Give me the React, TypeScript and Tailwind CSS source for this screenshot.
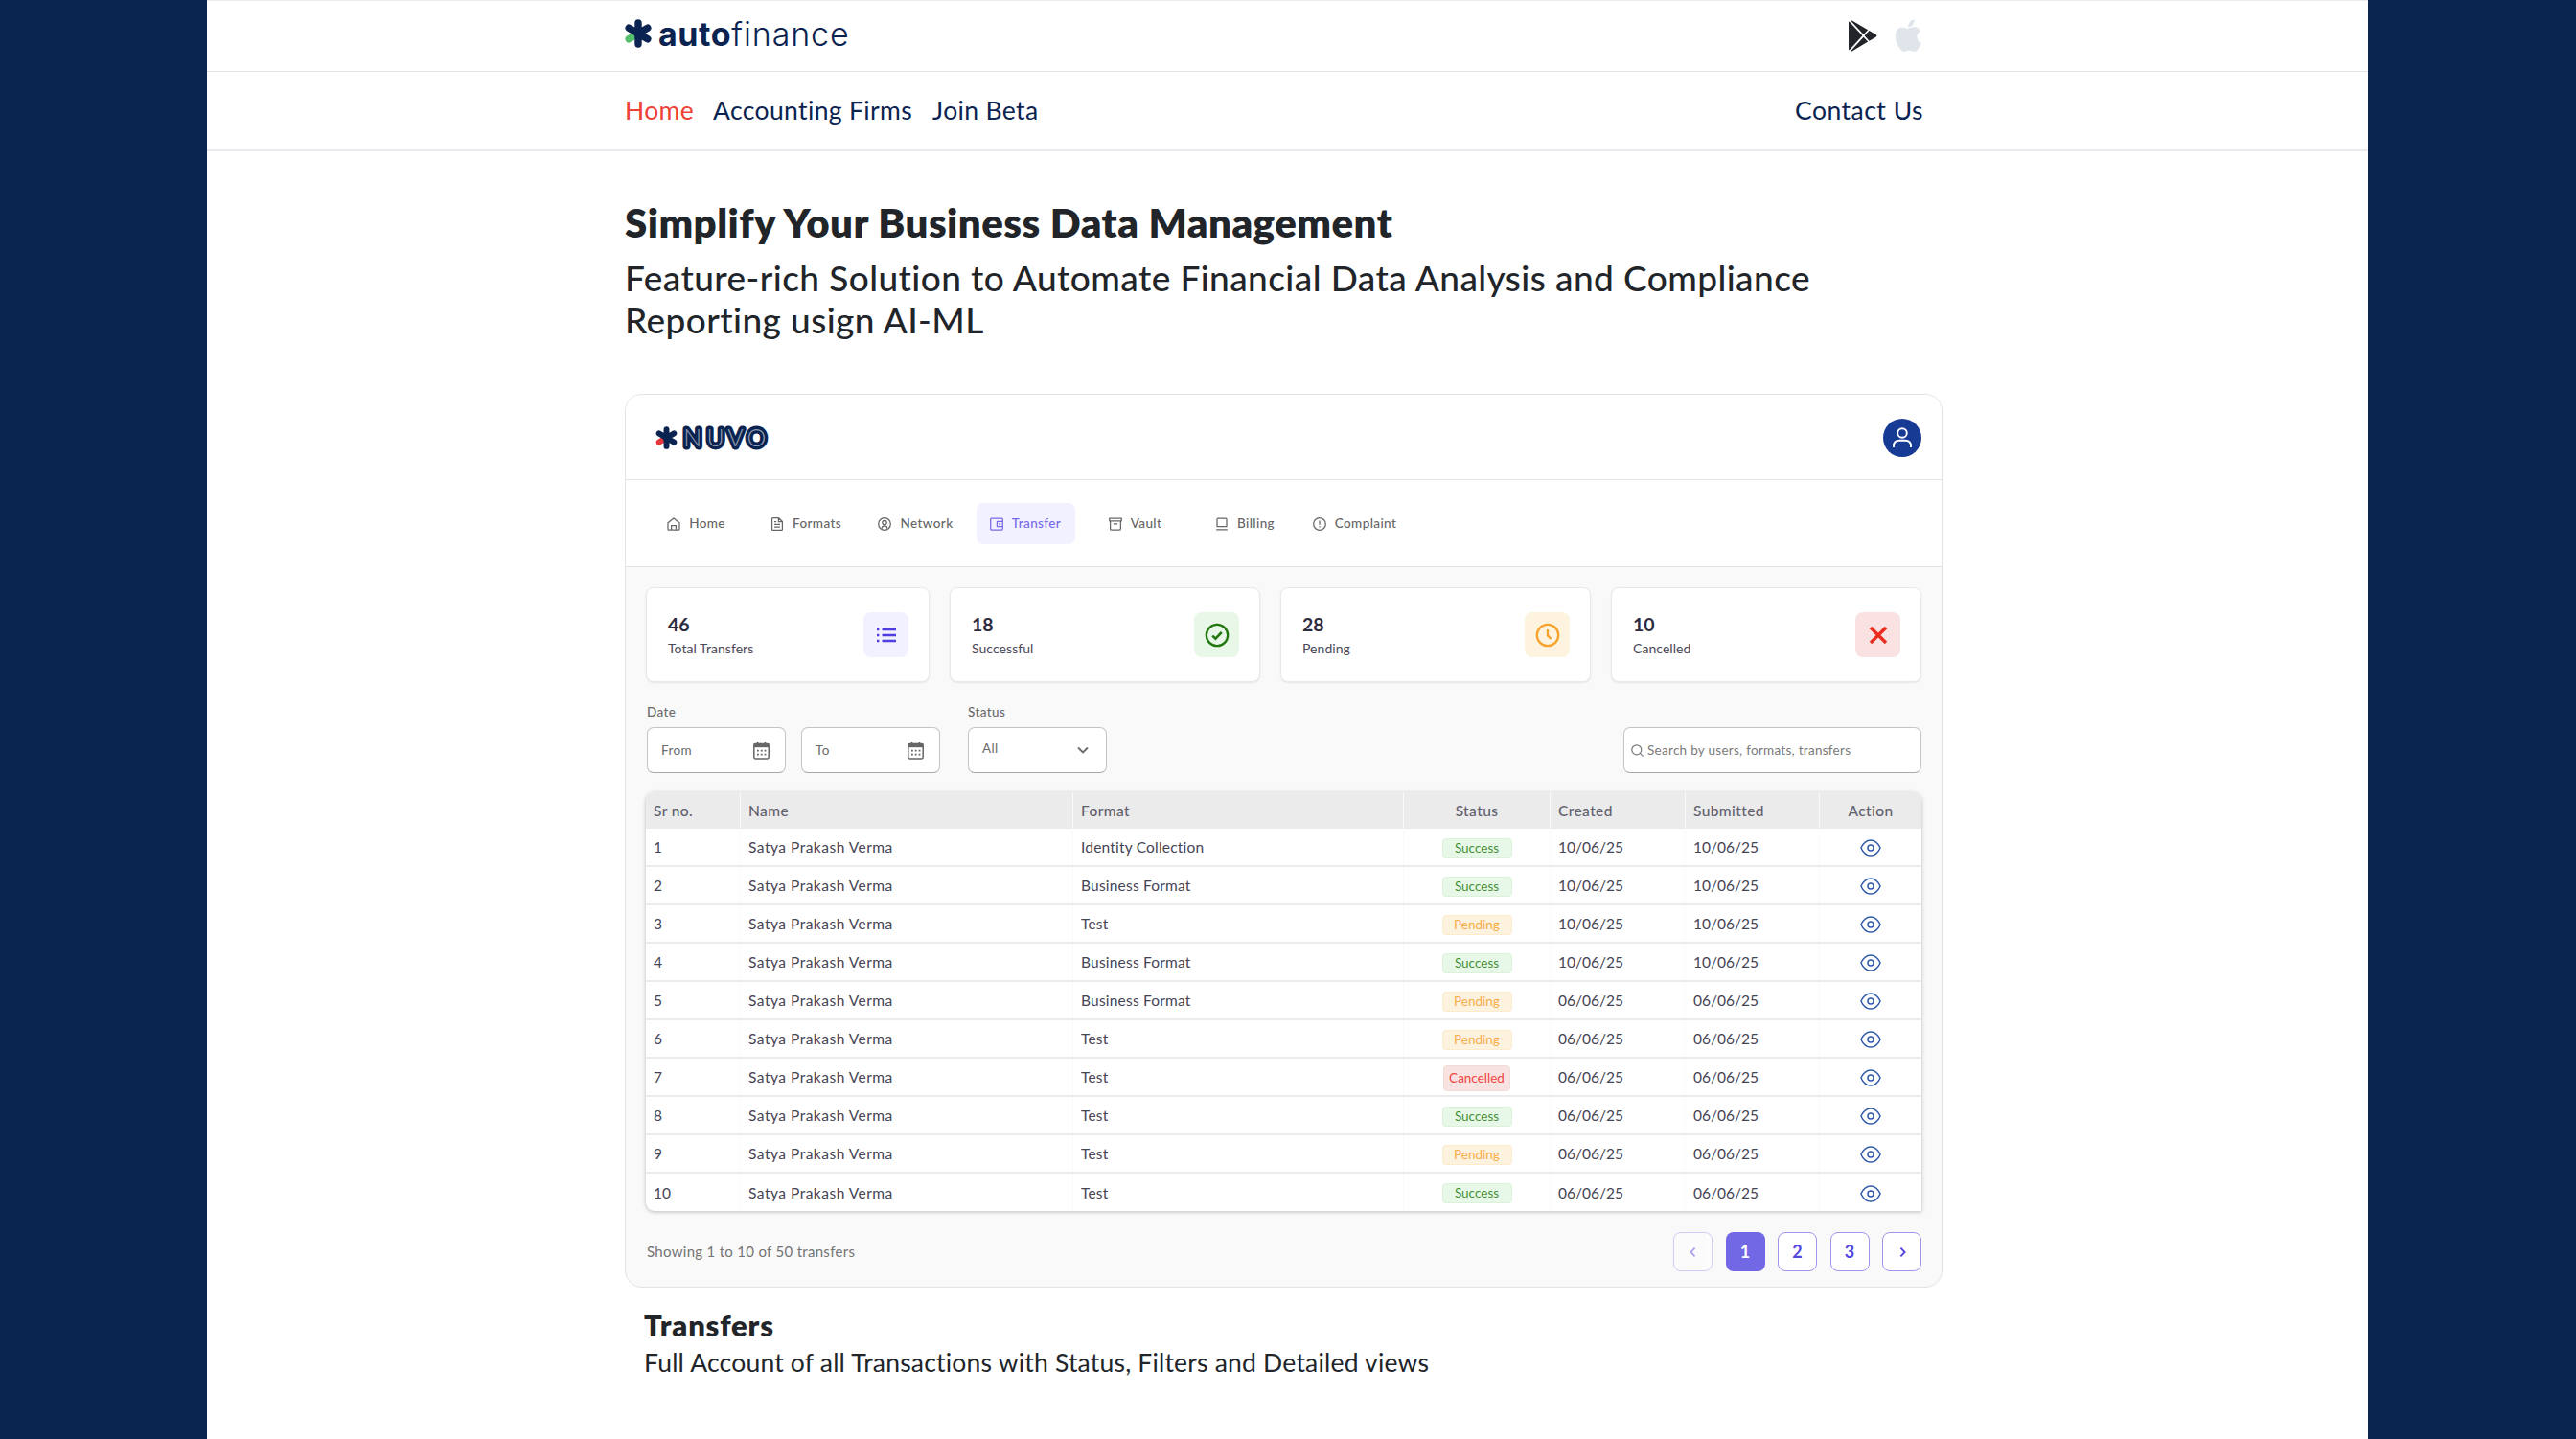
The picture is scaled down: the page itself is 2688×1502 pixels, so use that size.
import React from "react";
import { clsx } from "clsx";

type IconProps = { className?: string };

function Asterisk({ accent, className }: { accent: string; className?: string }) {
  return (
    <svg viewBox="0 0 28 30" className={className} fill="none" strokeWidth="7.4" strokeLinecap="round">
      <path d="M14 15 L4.2 20.8" stroke={accent} />
      <path d="M14 3.9 V26.1 M14 15 L4.2 9.2 M14 15 L23.8 9.2 M14 15 L23.8 20.8" stroke="#0a2350" />
      <circle cx="14" cy="15" r="4.6" fill="#0a2350" />
    </svg>
  );
}

function PlayStore({ className }: IconProps) {
  return (
    <svg viewBox="0 0 30 33" className={className} fill="#212529">
      <path d="M0.6 1.6 L14.4 16.3 L0.6 31.4 Q0 31 0 29.8 V3.2 Q0 2 0.6 1.6Z" />
      <path d="M2 0.4 Q3 0 4 0.7 L20.2 10.2 L15.6 15Z" />
      <path d="M2 32.4 Q3 33 4 32.2 L20.2 22.6 L15.6 17.7Z" />
      <path d="M21.5 10.9 L28 14.7 Q30.8 16.4 28 18.1 L21.5 21.8 L16.6 16.3Z" />
    </svg>
  );
}

function Apple({ className }: IconProps) {
  return (
    <svg viewBox="0 0 28 34" className={className} fill="#dfe5eb">
      <path d="M20.6 0.2 C20.9 3 19.8 5.2 18.3 6.7 C16.9 8 15.4 8.5 14.2 8.4 C14 5.9 15 3.8 16.4 2.4 C17.6 1.1 19.3 0.3 20.6 0.2Z" />
      <path d="M26.9 12.4 C24.6 13.8 23.4 15.8 23.4 18.4 C23.4 21.4 25.2 23.9 27.9 24.9 C27.2 27 26.1 29 24.7 30.9 C23.5 32.6 22.3 34 20.5 34 C18.5 34 17.8 32.8 15.2 32.8 C12.7 32.8 11.9 34 9.9 34 C8 34 6.7 32.5 5.4 30.6 C2.6 26.6 0.2 20.8 0.9 15.6 C1.6 10.9 4.7 8.4 7.9 8.4 C10.2 8.4 12 9.8 14.1 9.8 C15.8 9.8 17.9 8.2 20.7 8.3 C23.3 8.4 25.5 9.6 26.9 12.4Z" />
    </svg>
  );
}

function NavSvg({ children }: { children: React.ReactNode }) {
  return (
    <svg viewBox="0 0 14 14" className="size-[14px] shrink-0" fill="none" stroke="currentColor" strokeWidth="1.25" strokeLinejoin="round">
      {children}
    </svg>
  );
}

const navItems: { label: string; icon: React.ReactNode; active?: boolean }[] = [
  { label: "Home", icon: <path d="M1 5.8 L7 0.9 L13 5.8 V12.2 Q13 13.2 12 13.2 H2 Q1 13.2 1 12.2Z M4.6 13 V8.6 H9.4 V13" /> },
  { label: "Formats", icon: <path d="M1.6 1.6 Q1.6 0.7 2.5 0.7 H8.6 L12.4 4.5 V12.4 Q12.4 13.3 11.5 13.3 H2.5 Q1.6 13.3 1.6 12.4Z M8.4 0.9 V4.7 H12.2 M4 4.7 H6.2 M4 7.4 H10 M4 10.2 H10" /> },
  { label: "Network", icon: <><circle cx="7" cy="7" r="6.3" /><circle cx="7" cy="5.6" r="2.2" /><path d="M4.2 11.6 Q4.4 8.9 7 8.9 Q9.6 8.9 9.8 11.6" /></> },
  { label: "Transfer", active: true, icon: <><path d="M1.6 1 H12.4 Q13.3 1 13.3 1.9 V12.1 Q13.3 13 12.4 13 H1.6 Q0.7 13 0.7 12.1 V1.9 Q0.7 1 1.6 1Z M13.2 4.3 H8 Q7.4 4.3 7.4 5 V9 Q7.4 9.7 8 9.7 H13.2" /><path d="M9.2 7 H11.2" strokeWidth="1.6" /></> },
  { label: "Vault", icon: <path d="M0.7 1.2 H13.3 V3.9 H0.7Z M1.6 3.9 H12.4 V12.1 Q12.4 13 11.5 13 H2.5 Q1.6 13 1.6 12.1Z M4.8 6.9 H9.2" /> },
  { label: "Billing", icon: <path d="M2.9 1 H11.1 Q12 1 12 1.9 V9.6 H2 V1.9 Q2 1 2.9 1Z M1.2 12.8 H12.8" /> },
  { label: "Complaint", icon: <><circle cx="7" cy="7" r="6.3" /><path d="M7 3.4 V7.8 M7 9.2 V10.6" /></> },
];

const stats = [
  {
    value: "46", label: "Total Transfers", box: "bg-[#f2f1ff] text-[#4f3fe0]", card: "w-[296px]",
    icon: <path d="M8.5 6 H23 M8.5 12 H23 M8.5 18 H23 M3 6 H5.4 M3 12 H5.4 M3 18 H5.4" strokeWidth="2.4" />,
  },
  {
    value: "18", label: "Successful", box: "bg-[#e9f7e9] text-[#22770f]", card: "w-[324px]",
    icon: <><circle cx="13" cy="12" r="11.2" /><path d="M8.2 12.6 L11.4 15.6 L17.8 9" strokeWidth="2.6" /></>,
  },
  {
    value: "28", label: "Pending", box: "bg-[#fdf3de] text-[#f5a32c]", card: "w-[324px]",
    icon: <><circle cx="13" cy="12" r="11.2" /><path d="M13 6 V12.4 L16.6 16" /></>,
  },
  {
    value: "10", label: "Cancelled", box: "bg-[#fae2e2] text-[#ea2c1f]", card: "w-[324px]",
    icon: <path d="M5 4 L21 20 M21 4 L5 20" strokeWidth="3.5" />,
  },
];

const formats = ["Identity Collection", "Business Format", "Test", "Business Format", "Business Format", "Test", "Test", "Test", "Test", "Test"];
const statuses = ["Success", "Success", "Pending", "Success", "Pending", "Pending", "Cancelled", "Success", "Pending", "Success"];

const badgeStyles: Record<string, string> = {
  Success: "h-[21px] w-[73px] bg-[#e8f8e8] border-[#daf2da] text-[#459037]",
  Pending: "h-[21px] w-[73px] bg-[#fdf2de] border-[#fcebcd] text-[#f6ae47]",
  Cancelled: "h-[27px] w-[70px] bg-[#f9e2e2] border-[#f0dcd6] text-[#ee463e]",
};

const columns = "grid grid-cols-[99px_347px_345px_153px_141px_140px_106px]";

function Cell({ children, center, head }: { children: React.ReactNode; center?: boolean; head?: boolean }) {
  return (
    <div className={clsx("flex items-center border-r last:border-r-0", center ? "justify-center" : "pl-2", head ? "border-[#f9f9f9] pt-[2px]" : "border-[#fafafa] pt-[2px]")}>
      {children}
    </div>
  );
}

function Eye() {
  return (
    <svg viewBox="0 0 22 18" className="h-[18px] w-[22px]" fill="none" stroke="#3159ad" strokeWidth="1.5" strokeLinejoin="round">
      <path d="M0.9 9 Q4.6 0.9 11 0.9 Q17.4 0.9 21.1 9 Q17.4 17.1 11 17.1 Q4.6 17.1 0.9 9Z" />
      <circle cx="11" cy="9" r="3" />
    </svg>
  );
}

function Calendar() {
  return (
    <svg viewBox="0 0 17 19" className="h-[19px] w-[17px]" fill="none">
      <rect x="0.8" y="2.6" width="15.4" height="15.4" rx="1.4" stroke="#666" strokeWidth="1.5" />
      <path d="M0.6 2.4 H16.4 V6.2 H0.6Z" fill="#666" />
      <path d="M4.6 0.2 V3 M12.4 0.2 V3" stroke="#666" strokeWidth="1.7" />
      <path d="M4 9.6 H13.4 M4 13.6 H13.4" stroke="#666" strokeWidth="1.7" strokeDasharray="1.8 2" />
    </svg>
  );
}

const inputBox = "flex h-12 items-center rounded-[7px] border border-[#c4c4c4] border-b-[#a9a9a9] bg-white text-[#6b6b6b]";
const pageBtn = "flex h-[41px] w-[41px] items-center justify-center rounded-[8px] border border-[#9d95ee] bg-white text-[18px] font-bold text-[#5546df]";

function Chevron({ d, className }: { d: string; className?: string }) {
  return (
    <svg viewBox="0 0 12 12" className={clsx("size-[12px]", className)} fill="none" stroke="currentColor" strokeWidth="1.9">
      <path d={d} />
    </svg>
  );
}

function Dashboard() {
  return (
    <section className="mt-[55px] h-[933px] w-[1375px] overflow-hidden rounded-[18px] border border-[#e2e3e7] bg-[#f9f9f9]">
      <div className="flex h-[89px] items-center justify-between border-b border-[#e4e4e8] bg-white pt-px pr-[21px] pl-[31px]">
        <div className="flex items-center gap-[5px]">
          <Asterisk accent="#e5383b" className="h-[24px] w-[23px]" />
          <svg viewBox="0 0 92 26" className="h-[26px] w-[92px] overflow-visible" fontSize="25" fontWeight="300" fontFamily="Lato, sans-serif">
            <text x="1.2 25.4 47.2 67.4" y="21.8" fill="#0a2350" stroke="#0a2350" strokeWidth="6.8" strokeLinejoin="round">NUVO</text>
            <text x="1.2 25.4 47.2 67.4" y="21.8" fill="#8f98ad" aria-hidden="true">NUVO</text>
          </svg>
        </div>
        <div className="flex size-[40px] items-center justify-center rounded-full bg-[#173b94]">
          <svg viewBox="0 0 20 22" className="h-[22px] w-[20px]" fill="none" stroke="#fff" strokeWidth="1.9">
            <circle cx="10" cy="6" r="4.8" />
            <path d="M1 21 V19.6 Q1 13.8 7 13.8 H13 Q19 13.8 19 19.6 V21" />
          </svg>
        </div>
      </div>

      <nav className="flex h-[91px] items-center gap-[11.5px] border-b border-[#e2e2e4] bg-white pt-px pl-[22px]">
        {navItems.map((n) => (
          <a
            key={n.label}
            className={clsx(
              "flex h-[43px] w-[103px] items-center justify-center gap-[9px] rounded-[7px] text-[13.5px] font-medium tracking-[0.4px] whitespace-nowrap",
              n.active ? "bg-[#f2f1ff] text-[#7669ea]" : "text-[#666666]",
            )}
          >
            <NavSvg>{n.icon}</NavSvg>
            {n.label}
          </a>
        ))}
      </nav>

      <div className="px-[21px] pt-[21px]">
        <div className="flex justify-between">
          {stats.map((s) => (
            <div key={s.label} className={clsx("flex h-[99px] items-center justify-between rounded-[8px] border border-[#e9e9e9] bg-white pr-[21px] pl-[22px] shadow-[0_1px_2px_rgba(0,0,0,0.08)]", s.card)}>
              <div className="pt-px">
                <div className="text-[19.5px] leading-[26px] font-bold text-[#2d2b40]">{s.value}</div>
                <div className="mt-[2px] text-[14px] leading-5 tracking-[0.05px] text-[#4a4959]">{s.label}</div>
              </div>
              <div className={clsx("flex size-[47px] items-center justify-center rounded-[8px]", s.box)}>
                <svg viewBox="0 0 26 24" className="h-[24px] w-[26px] overflow-visible" fill="none" stroke="currentColor" strokeWidth="2.3">
                  {s.icon}
                </svg>
              </div>
            </div>
          ))}
        </div>

        <div className="mt-[23px] flex items-end pl-px text-[13.5px] tracking-[0.4px] text-[#6b6b6b]">
          <div>
            <div className="leading-4 font-medium">Date</div>
            <div className="mt-2 flex gap-4">
              {["From", "To"].map((t) => (
                <div key={t} className={clsx(inputBox, "w-[145px] justify-between pr-[16px] pl-[14px]")}>
                  {t}
                  <Calendar />
                </div>
              ))}
            </div>
          </div>
          <div className="ml-[29px]">
            <div className="leading-4 font-medium">Status</div>
            <div className={clsx(inputBox, "mt-2 w-[145px] justify-between pr-[18px] pl-[14px]")}>
              <span className="-mt-1">All</span>
              <Chevron d="M1 3.5 L6 8.5 L11 3.5" />
            </div>
          </div>
          <div className={clsx(inputBox, "ml-auto w-[311px] gap-[4px] pl-[7px] tracking-[0.28px] text-[#7a7a7a]")}>
            <svg viewBox="0 0 13 13" className="size-[13px]" fill="none" stroke="currentColor" strokeWidth="1.2">
              <circle cx="5.8" cy="5.8" r="5" />
              <path d="M9.4 9.4 L12.6 12.6" />
            </svg>
            Search by users, formats, transfers
          </div>
        </div>

        <div className="mt-5 overflow-hidden rounded-tl-[9px] rounded-tr-[9px] rounded-bl-[9px] bg-white text-[15.5px] text-[#454454] shadow-[0_1px_4px_rgba(0,0,0,0.25)]">
          <div className={clsx(columns, "h-[38px] bg-[#ebebeb] font-medium tracking-[0.4px] text-[#62616e]")}>
            <Cell head>Sr no.</Cell>
            <Cell head>Name</Cell>
            <Cell head>Format</Cell>
            <Cell head center>Status</Cell>
            <Cell head>Created</Cell>
            <Cell head>Submitted</Cell>
            <Cell head center>Action</Cell>
          </div>
          {formats.map((format, i) => {
            const date = i < 4 ? "10/06/25" : "06/06/25";
            return (
              <div key={i} className={clsx(columns, "h-10 border-b-2 border-[#ebebeb] last:h-[39px] last:border-b-0")}>
                <Cell>{i + 1}</Cell>
                <Cell><span className="tracking-[0.5px]">Satya Prakash Verma</span></Cell>
                <Cell><span className="tracking-[0.2px]">{format}</span></Cell>
                <Cell center>
                  <span className={clsx("flex items-center justify-center rounded-[4px] border text-[13.5px]", badgeStyles[statuses[i]])}>{statuses[i]}</span>
                </Cell>
                <Cell><span>{date}</span></Cell>
                <Cell><span>{date}</span></Cell>
                <Cell center><Eye /></Cell>
              </div>
            );
          })}
        </div>

        <div className="mt-[22px] flex items-center justify-between">
          <span className="pl-px text-[15px] tracking-[0.3px] text-[#747474]">Showing 1 to 10 of 50 transfers</span>
          <div className="flex gap-[13.5px]">
            <span className={clsx(pageBtn, "opacity-45")}><Chevron d="M7.6 1.6 L3.4 6 L7.6 10.4" /></span>
            <span className="flex h-[41px] w-[41px] items-center justify-center rounded-[8px] bg-[#7267e4] text-[18px] font-bold text-white">1</span>
            <span className={pageBtn}>2</span>
            <span className={pageBtn}>3</span>
            <span className={pageBtn}><Chevron d="M4.4 1.6 L8.6 6 L4.4 10.4" /></span>
          </div>
        </div>
      </div>
    </section>
  );
}

export default function App() {
  return (
    <div className="h-[1502px] overflow-hidden bg-[#0a2550] pr-[217px] pl-[216px] font-['Lato',sans-serif]">
      <div className="h-full bg-white text-[#212529]">
        <header className="flex h-[75px] items-center justify-between border-t border-b border-t-[#e9ecef] border-b-[#e1e4e8] pr-[466px] pb-[3px] pl-[436px]">
          <div className="flex items-center gap-[7px] font-['Inter',sans-serif] text-[34px] leading-[34px] text-[#0a2350]">
            <Asterisk accent="#56bf6b" className="mb-[3px] h-[30px] w-[28px]" />
            <span><span className="font-bold tracking-[0.6px]">auto</span><span className="font-light tracking-[0.9px]">finance</span></span>
          </div>
          <div className="flex items-end gap-[18px] pt-[2px]">
            <PlayStore className="h-[33px] w-[30px]" />
            <Apple className="h-[34px] w-[28px]" />
          </div>
        </header>
        <nav className="flex h-[83px] items-center border-b-2 border-[#e8ebef] pr-[464px] pl-[436px] text-[26.5px] tracking-[0.36px] text-[#0a2350]">
          <a className="text-[#ee4035]">Home</a>
          <a className="ml-[20px]">Accounting Firms</a>
          <a className="ml-[21px]">Join Beta</a>
          <a className="ml-auto tracking-[0.5px]">Contact Us</a>
        </nav>
        <main className="pt-[52px] pl-[436px]">
          <h1 className="text-[42px] leading-[44px] font-extrabold tracking-[0.46px]">Simplify Your Business Data Management</h1>
          <h2 className="mt-[14px] w-[1300px] text-[37px] leading-[44px] font-medium tracking-[0.42px]">
            Feature-rich Solution to Automate Financial Data Analysis and Compliance Reporting usign AI-ML
          </h2>
          <Dashboard />
          <div className="mt-[21px] pl-[20px]">
            <h3 className="text-[31px] leading-9 font-extrabold tracking-[0.8px]">Transfers</h3>
            <p className="mt-[5px] text-[26.5px] leading-8 tracking-[0.2px]">Full Account of all Transactions with Status, Filters and Detailed views</p>
          </div>
        </main>
      </div>
    </div>
  );
}
